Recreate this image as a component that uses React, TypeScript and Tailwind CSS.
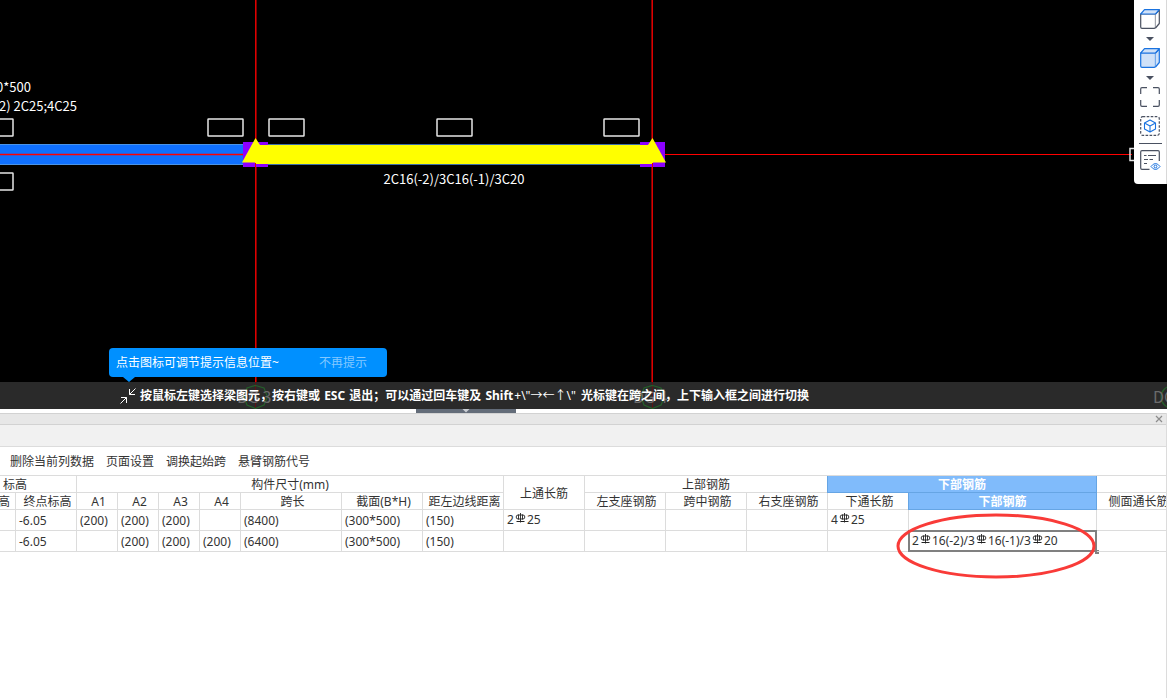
import type { ReactNode } from "react";
import { clsx } from "clsx";

const MARK_BOXES = [
  { x: -22, y: 119 },
  { x: -22, y: 173 },
  { x: 208, y: 119 },
  { x: 269, y: 119 },
  { x: 437, y: 119 },
  { x: 604, y: 119 },
];

const COLUMN_WIDTHS = [62, 61, 41, 41, 41, 41, 101, 81, 81, 81, 81, 81, 81, 81, 188, 81];

const SUB_HEADERS = [
  "起点标高", "终点标高", "A1", "A2", "A3", "A4", "跨长", "截面(B*H)", "距左边线距离",
  "左支座钢筋", "跨中钢筋", "右支座钢筋", "下通长筋", "下部钢筋", "侧面通长筋",
];

// "#" stands for the rebar grade symbol
const ROWS = [
  ["", "-6.05", "(200)", "(200)", "(200)", "", "(8400)", "(300*500)", "(150)", "2#25", "", "", "", "4#25", "", ""],
  ["", "-6.05", "", "(200)", "(200)", "(200)", "(6400)", "(300*500)", "(150)", "", "", "", "", "", "2#16(-2)/3#16(-1)/3#20", ""],
];

const ACTIVE_ROW = 1;
const ACTIVE_COLUMN = 14;

function BeamDrawing() {
  return (
    <svg
      width="1167"
      height="409"
      className="block max-w-none font-['Noto_Sans_CJK_SC',sans-serif]"
      fill="none"
    >
      <path d="M255.8 0V409M652.2 0V409" stroke="#e80000" strokeWidth="1.5" />

      {/* beams */}
      <rect x="-2" y="144.5" width="250" height="20" fill="#0f70ff" stroke="#4a94e8" />
      <path d="M0 154.5H246" stroke="#f00" strokeWidth="1.3" />
      <path d="M660 154.5H1132" stroke="#f00" />
      <rect x="243" y="142" width="25" height="25" fill="#8c00ff" />
      <rect x="640" y="142" width="25" height="25" fill="#8c00ff" />
      <rect x="268" y="144" width="372" height="21" fill="#3d6fa8" />
      <rect x="255" y="145" width="398" height="19" fill="#ff0" />
      <path d="M242 162.500L255.5 138L260 145V162.500Z" fill="#ff0" />
      <path d="M648 145L652.5 138L666 162.500H648Z" fill="#ff0" />
      <path d="M255.5 163V170M652.5 163V170" stroke="#e00000" />

      {MARK_BOXES.map((box) => (
        <rect key={`${box.x}-${box.y}`} x={box.x} y={box.y} width="35" height="17" rx="0.5" stroke="#e6e6e6" strokeWidth="1.5" />
      ))}
      <path d="M1136 148.5H1130V160.5H1136" stroke="#e6e6e6" strokeWidth="1.5" />

      <g fill="#fff" fontSize="13">
        <text x="31" y="92" textAnchor="end">300*500</text>
        <text x="77" y="111" textAnchor="end">(2) 2C25;4C25</text>
        <text x="454" y="184" textAnchor="middle">2C16(-2)/3C16(-1)/3C20</text>
      </g>
    </svg>
  );
}

function AxisLabels() {
  return (
    <svg width="1167" height="27" className="absolute left-0 top-0 max-w-none font-['Noto_Sans_CJK_SC',sans-serif] font-normal" fill="none">
      <path d="M255.5 0V27M652.5 0V27" stroke="#5c1414" />
      <g stroke="#24602a" strokeWidth="1.2">
        <path d="M255.5 3.5L264 6L267.5 15L264 23L255.5 26.5L247 23L244 15L247 6Z" />
        <path d="M652.5 3.5L661 6L664.5 15L661 23L652.5 26.5L644 23L641 15L644 6Z" />
        <circle cx="1172" cy="15" r="11" />
      </g>
      <g fill="#6b6b6b" fontSize="16">
        <text x="237" y="21">DG 3</text>
        <text x="633" y="21">DG 4</text>
        <text x="1153" y="21">DG</text>
      </g>
    </svg>
  );
}

function CubeIcon({ solid = false }: { solid?: boolean }) {
  const edge = solid ? "#1a73e0" : "#4a5161";
  const side = solid ? "#cfe1f8" : "#fff";
  return (
    <svg width="20" height="20" viewBox="0 0 20 20" fill="none" strokeWidth="1.2" strokeLinejoin="round">
      <path d="M0.700 5H15.500V18Q15.500 19.300 14.200 19.300H2Q0.700 19.300 0.700 18Z" fill={side} stroke={edge} />
      <path d="M15.500 5L19.300 1V14.500L15.500 19" fill={side} stroke={edge} />
      <path d="M0.700 5L4.500 0.700H19.300L15.500 5Z" fill="#cfe1f8" stroke="#1a73e0" />
    </svg>
  );
}

function Caret() {
  return (
    <svg width="8" height="4" viewBox="0 0 8 4">
      <path d="M0 0H8L4 4Z" fill="#4a5161" />
    </svg>
  );
}

function ViewToolbar() {
  return (
    <div className="absolute right-0 top-0 flex h-[184px] w-[33px] flex-col items-center rounded-bl-sm border-r border-[#d8d8d8] bg-white pt-[9px]">
      <button type="button" aria-label="3D view" className="h-5"><CubeIcon /></button>
      <button type="button" aria-label="3D view options" className="flex h-[19px] w-5 items-center justify-center"><Caret /></button>
      <button type="button" aria-label="Shaded view" className="h-5"><CubeIcon solid /></button>
      <button type="button" aria-label="Shaded view options" className="flex h-[19px] w-5 items-center justify-center"><Caret /></button>
      <button type="button" aria-label="Zoom to fit" className="h-5">
        <svg width="20" height="20" viewBox="0 0 20 20" fill="none" stroke="#4a5161" strokeWidth="1.2">
          <path d="M7 0.700H2Q0.700 0.700 0.700 2V7M13 0.700H18Q19.300 0.700 19.300 2V7M0.700 13V18Q0.700 19.300 2 19.300H7M19.300 13V18Q19.300 19.300 18 19.300H13" />
        </svg>
      </button>
      <button type="button" aria-label="Isolate" className="mt-[9px] h-5">
        <svg width="20" height="20" viewBox="0 0 20 20" fill="none">
          <rect x="0.7" y="0.7" width="18.6" height="18.6" rx="2" stroke="#4a5161" strokeWidth="1.2" strokeDasharray="2.6 1.4" />
          <path d="M10 4L15.5 7V13L10 16L4.5 13V7ZM4.5 7L10 10L15.5 7M10 10V16" stroke="#1a73e0" strokeWidth="1.1" strokeLinejoin="round" />
        </svg>
      </button>
      <div className="mb-[6px] mt-[7px] h-px w-[23px] shrink-0 bg-[#4a5161]" />
      <button type="button" aria-label="Display settings" className="h-5">
        <svg width="20" height="20" viewBox="0 0 20 20" fill="none" strokeWidth="1.2" className="overflow-visible">
          <path d="M9.500 19.300H2Q0.700 19.300 0.700 18V2Q0.700 0.700 2 0.700H18Q19.300 0.700 19.300 2V11" stroke="#4a5161" />
          <path d="M4 5.500H6.500M8 5.500H16M4 9.500H8M9.500 9.500H13M4 13.500H7" stroke="#4a5161" />
          <path d="M11 16.500Q15.500 10.500 20 16.500Q15.500 22.500 11 16.500Z" stroke="#1a73e0" strokeWidth="1" />
          <circle cx="15.500" cy="16.500" r="1.400" stroke="#1a73e0" strokeWidth="1" />
        </svg>
      </button>
    </div>
  );
}

function Tip() {
  return (
    <div className="absolute bottom-[32px] left-[109px] flex h-[29px] w-[278px] items-center rounded bg-[#0090ff] pl-[7px] pr-5 text-white">
      <span>点击图标可调节提示信息位置~</span>
      <button type="button" className="ml-auto text-[#83c8ff]">不再提示</button>
      <svg width="12" height="5" viewBox="0 0 12 5" className="absolute left-[14px] top-full">
        <path d="M0 0H12L6 5Z" fill="#0090ff" />
      </svg>
    </div>
  );
}

function RebarSymbol() {
  return (
    <svg width="11" height="10" viewBox="0 0 11 10" fill="none" stroke="#222" className="mx-px inline-block align-[1px]">
      <path d="M5.500 0V9.500M3 2H8Q9.800 2 9.800 4Q9.800 6 8 6H3Q1.200 6 1.200 4Q1.200 2 3 2M3.500 1.500V6.500M7.500 1.500V6.500" strokeWidth="0.9" />
      <path d="M1.500 8.500H9.500" />
    </svg>
  );
}

function RebarText({ value }: { value: string }) {
  const parts = value.split("#");
  return (
    <span className={clsx(parts.length > 1 && "relative -top-px")}>
      {parts.map((part, i) => (
        <span key={i}>
          {i > 0 && <RebarSymbol />}
          {part}
        </span>
      ))}
    </span>
  );
}

function HeaderCell({ children, active, colSpan, rowSpan, sub }: {
  children?: ReactNode;
  active?: boolean;
  colSpan?: number;
  rowSpan?: number;
  sub?: boolean;
}) {
  return (
    <th
      colSpan={colSpan}
      rowSpan={rowSpan}
      className={clsx(
        "h-[17px] whitespace-nowrap border-b border-r pb-0 pr-0 pt-[2px] text-center leading-[14px]",
        sub && !active ? "pl-[3px]" : "pl-0",
        active
          ? "border-[#66a5e4] bg-[#80bbfb] font-bold text-white shadow-[-1px_0_0_#66a5e4]"
          : "border-[#dcdcdc] font-normal"
      )}
    >
      {children}
    </th>
  );
}

function SpanTable() {
  return (
    <table className="-ml-[46px] w-[1224px] table-fixed border-separate border-spacing-0">
      <colgroup>
        {COLUMN_WIDTHS.map((width, i) => (
          <col key={i} style={{ width }} />
        ))}
      </colgroup>
      <thead>
        <tr>
          <HeaderCell colSpan={2}>标高</HeaderCell>
          <HeaderCell colSpan={7}>构件尺寸(mm)</HeaderCell>
          <HeaderCell rowSpan={2}>上通长筋</HeaderCell>
          <HeaderCell colSpan={3}>上部钢筋</HeaderCell>
          <HeaderCell colSpan={2} active>下部钢筋</HeaderCell>
          <HeaderCell />
        </tr>
        <tr>
          {SUB_HEADERS.map((title) => (
            <HeaderCell key={title} sub active={title === "下部钢筋"}>{title}</HeaderCell>
          ))}
        </tr>
      </thead>
      <tbody>
        {ROWS.map((row, r) => (
          <tr key={r}>
            {row.map((value, c) => {
              const active = r === ACTIVE_ROW && c === ACTIVE_COLUMN;
              return (
                <td key={c} className="relative h-[21px] whitespace-nowrap border-b border-r border-[#dcdcdc] pb-0 pl-[3px] pr-0 pt-[2px] leading-[18px]">
                  <RebarText value={value} />
                  {active && <ActiveCellMarks />}
                </td>
              );
            })}
          </tr>
        ))}
      </tbody>
    </table>
  );
}

function ActiveCellMarks() {
  return (
    <>
      <div className="absolute -inset-px border-2 border-[#808080]" />
      <div className="absolute -bottom-[3px] -right-[3px] size-1 bg-[#808080]" />
      <svg width="202" height="66" viewBox="0 0 202 66" className="absolute -left-[14px] -top-[18px] max-w-none" fill="none">
        <ellipse cx="101" cy="33" rx="98" ry="31" stroke="#f93b38" strokeWidth="3" />
      </svg>
    </>
  );
}

export default function App() {
  return (
    <div className="flex min-h-screen flex-col overflow-hidden bg-white font-['Noto_Sans','Noto_Sans_CJK_SC',sans-serif] text-[12px] text-[#333]">
      {/* drawing area */}
      <section className="relative overflow-hidden bg-black">
        <BeamDrawing />
        <ViewToolbar />
        <Tip />
        <div className="absolute inset-x-0 bottom-0 flex h-[27px] items-center overflow-hidden bg-[#2a2a2a] pl-[120px] font-bold text-white">
          <AxisLabels />
          <svg width="16" height="16" viewBox="0 0 16 16" fill="none" stroke="#fff" className="relative mr-1 shrink-0">
            <path d="M15.500 0.500L9.500 6.500M9.500 1V6.500H15M0.500 15.500L6.500 9.500M1 9.500H6.500V15" />
          </svg>
          <p className="relative whitespace-nowrap">
            按鼠标左键选择梁图元，按右键或 <span className="mx-px">ESC</span> 退出；可以通过回车键及{" "}
            <span className="mx-px">
              Shift<span className="px-px font-normal">+\"→←↑\"</span>
            </span>{" "}
            光标键在跨之间，上下输入框之间进行切换
          </p>
        </div>
      </section>

      <div className="flex h-1 pl-[416px]">
        <div className="flex w-[100px] justify-center bg-[#636c79]">
          <svg width="8" height="4" viewBox="0 0 8 4">
            <path d="M0.500 0H7.500L4 3.500Z" fill="#c9cdd3" />
          </svg>
        </div>
      </div>

      {/* span table panel */}
      <section className="flex-1 overflow-hidden border-r border-[#dcdcdc]">
        <div className="flex h-3 items-center justify-end border-y border-[#d2d2d2] bg-[#e7e7e7] pr-[3px]">
          <button type="button" aria-label="Close">
            <svg width="8" height="8" viewBox="0 0 8 8" stroke="#8c8c8c" strokeWidth="1.2">
              <path d="M1 1L7 7M7 1L1 7" />
            </svg>
          </button>
        </div>
        <div className="h-[22px] border-b border-[#dcdcdc] bg-[#f1f1f1]" />
        <div className="flex h-[29px] items-center gap-3 border-b border-[#dcdcdc] pl-[10px] pt-[2px]">
          <button type="button">删除当前列数据</button>
          <button type="button">页面设置</button>
          <button type="button">调换起始跨</button>
          <button type="button">悬臂钢筋代号</button>
        </div>
        <SpanTable />
      </section>
    </div>
  );
}
